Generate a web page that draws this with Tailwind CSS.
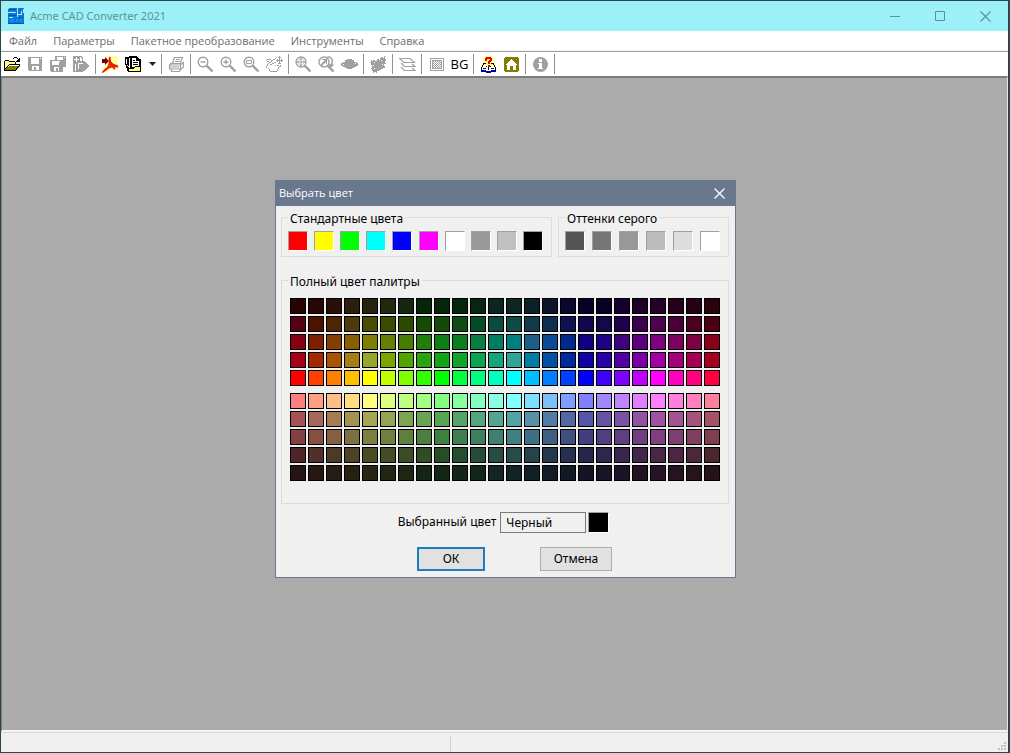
<!DOCTYPE html>
<html lang="ru">
  <head>
    <meta charset="UTF-8" />
    <meta name="viewport" content="width=device-width, initial-scale=1.0" />
    <title>Acme CAD Converter 2021</title>
    <script src="https://cdn.jsdelivr.net/npm/@tailwindcss/browser@4"></script>
  </head>
  <body class="relative flex h-screen flex-col overflow-hidden border-t border-b border-l border-r-2 border-[#30454b] bg-[#f0f0f0] font-['Open_Sans','Noto_Sans',sans-serif] text-[11px] leading-4">
    <!-- Title bar -->
    <header class="flex h-[30px] shrink-0 items-center bg-[#9cf0f8] pl-[7px] text-[#5f9297]">
      <svg class="h-4 w-4" viewBox="0 0 16 16" shape-rendering="crispEdges">
        <path fill="#0878d8" d="M0 0h16v16H0z" />
        <path fill="#b8e4ff" d="M0 4h8v1H0zM9 0h1v9H9zM10 6h4v1h-4zM13 3h1v4h-1zM15 1h1v4h-1zM1 9h4v1H1zM0 0h1v1H0z" />
        <path fill="#0454b0" d="M1 1h7v1H1zM0 15h16v1H0zM1 7h7v1H1zM11 9h4v1h-4z" />
        <path fill="#1c8ae8" d="M2 3h4v1H2zM2 11h4v3H2zM8 11h2v3H8zM12 11h2v3h-2z" />
      </svg>
      <h1 class="ml-[6px] font-['Noto_Sans',sans-serif]">Acme CAD Converter 2021</h1>
      <div class="ml-auto flex h-full">
        <button class="flex w-[45px] items-center justify-center" aria-label="Свернуть">
          <svg class="h-[11px] w-[11px]" viewBox="0 0 11 11"><path fill="none" stroke="currentColor" d="M0 5.5h10" /></svg>
        </button>
        <button class="flex w-[45px] items-center justify-center" aria-label="Развернуть">
          <svg class="h-[11px] w-[11px]" viewBox="0 0 11 11"><path fill="none" stroke="currentColor" d="M.5.5h9v9h-9z" /></svg>
        </button>
        <button class="flex w-[45px] items-center justify-center" aria-label="Закрыть">
          <svg class="h-[11px] w-[11px]" viewBox="0 0 11 11"><path fill="none" stroke="currentColor" stroke-width="1.2" d="M.5.5l10 10M10.5.5l-10 10" /></svg>
        </button>
      </div>
    </header>

    <!-- Menu -->
    <nav class="flex h-5 shrink-0 items-center border-b border-[#f0f0f0] bg-white text-[#6d6d6d]">
      <button class="px-2">Файл</button>
      <button class="px-2">Параметры</button>
      <button class="px-2">Пакетное преобразование</button>
      <button class="px-2">Инструменты</button>
      <button class="px-2">Справка</button>
    </nav>

    <!-- Toolbar -->
    <div class="flex h-[25px] shrink-0 items-center border-t border-[#a0a0a0] bg-white text-[#a0a0a0]" role="toolbar">
      <button class="flex w-[23px] justify-center" aria-label="Открыть">
        <svg class="h-[17px] w-[17px]" viewBox="0 0 17 17" shape-rendering="crispEdges">
          <path fill="#ffff90" d="M1 5h4v1h6v3H4l-3 5z" />
          <path fill="#808000" d="M5 10h11l-4 4H1v-1h1v-1h1v-1h2z" />
          <path fill="#000" d="M1 4h4v1H1zM0 5h1v9H0zM5 5h6v1H5zM11 6h1v3h-1zM5 8h11v1H5zM15 9h1v1h-1zM14 10h1v1h-1zM13 11h1v1h-1zM12 12h1v1h-1zM0 14h12v-1h1v1h-1v1H0zM4 9h1v1H4zM3 10h1v1H3zM2 11h1v1H2zM1 12h1v1H1zM10 1h3v1h-3zM9 2h1v1H9zM13 2h1v1h-1zM15 2h1v4h-4V5h1V4h1V3h1z" />
        </svg>
      </button>
      <button class="flex w-[23px] justify-center" aria-label="Сохранить" disabled>
        <svg class="h-[17px] w-[17px]" viewBox="0 0 17 17" shape-rendering="crispEdges">
          <path fill="currentColor" fill-rule="evenodd" d="M1 1h14v14H2l-1-1zM4 2v6h8V2zM5 10v4h2v-3h2v3h3v-4zM14 2v1h-1V2z" />
        </svg>
      </button>
      <button class="flex w-[23px] justify-center" aria-label="Сохранить все" disabled>
        <svg class="h-[17px] w-[17px]" viewBox="0 0 17 17" shape-rendering="crispEdges">
          <path fill="currentColor" fill-rule="evenodd" d="M5 0h11v11h-3v5H1l-1-1V4h5zM7 1v3h6V1zM2 5v4h7V5zM4 11v4h2v-3h2v3h1v-4zM14 1v1h1V1zM9 5h1v1H9z" />
        </svg>
      </button>
      <button class="flex w-[23px] justify-center" aria-label="Экспорт" disabled>
        <svg class="h-[17px] w-[17px]" viewBox="0 0 17 17" shape-rendering="crispEdges">
          <path fill="currentColor" fill-rule="evenodd" d="M0 0h9v1h1v4h2v1h1v1h1v1h1v1h1v2h-1v1h-1v1h-1v1h-1v1h-2v1H0zM3 1v2H1v1h2v2h1V4h2V3H4V1zM7 1v4h2V2H8V1zM5 7v6h1V8h4V7zM2 8v7h1V8z" />
        </svg>
      </button>
      <span class="mr-[3px] ml-[2px] h-5 w-px bg-[#909090]"></span>
      <button class="flex w-[23px] justify-center" aria-label="PDF">
        <svg class="h-[17px] w-[17px]" viewBox="0 0 17 17">
          <path fill="#ffffa0" d="M4 0h12v7l1 4-1 3H9l-6 3-2-2 2-5-2-3 2-5z" />
          <path fill="none" stroke="#e81808" stroke-width="1.8" d="M8 1c-1 4 1 8 8 9.500-6-.5-11 .5-14.500 5 4-1.500 7-7 6-13M8 8l5 5" />
          <path fill="#780010" d="M0 3h3V1l4 4-4 4V7H0z" />
        </svg>
      </button>
      <button class="flex w-[23px] justify-center" aria-label="Пакетное преобразование">
        <svg class="h-[17px] w-[17px]" viewBox="0 0 17 17" shape-rendering="crispEdges">
          <path fill="#000" d="M0 1h4V0h8v1h1v1h1v1h2v13H3v-1H2v-3H1V9H0z" />
          <path fill="#fff" d="M7 2h4v3h3v6H7zM4 2h1v9H4zM1 3h1v5H1z" />
          <path fill="#ffff80" d="M2 8l3 4h4l2-2h4v5H4z" />
          <path fill="#000" d="M8 4h2v1H8zM8 6h5v1H8zM8 8h5v1H8zM11 2h1v2h2v1h-3zM2 10h1v1h1v1h1v1H3v-1H2zM5 12h4v1H5zM9 11h1v1H9zM10 10h5v1h-5z" />
        </svg>
      </button>
      <button class="flex w-[14px] justify-center" aria-label="Еще">
        <svg class="h-[5px] w-[7px]" viewBox="0 0 7 5"><path fill="#202020" d="M0 0h7L3.5 4z" /></svg>
      </button>
      <span class="mr-[3px] ml-[2px] h-5 w-px bg-[#909090]"></span>
      <button class="flex w-[23px] justify-center" aria-label="Печать" disabled>
        <svg class="h-[17px] w-[17px]" viewBox="0 0 17 17" fill="none" stroke="currentColor" stroke-width="1.2">
          <path d="M4.500 7l2-5.500h8l-2 5.500M3 7.500h10M1.500 9v4h11V9zM1.500 9l2-2M12.500 9l3-2.500v4.500l-3 2.500M3.500 13v2.500h8l1-2M8 3.500h4M7 5.500h5M2 11h9" />
        </svg>
      </button>
      <span class="mr-[3px] ml-[2px] h-5 w-px bg-[#909090]"></span>
      <button class="flex w-[23px] justify-center" aria-label="Уменьшить" disabled>
        <svg class="h-[17px] w-[17px]" viewBox="0 0 17 17" fill="none" stroke="currentColor">
          <circle cx="6" cy="6" r="4.800" stroke-width="1.400" />
          <path d="M3.500 6h5" stroke-width="1.400" />
          <path stroke-width="2.400" d="M9.500 9.500l6 6" />
        </svg>
      </button>
      <button class="flex w-[23px] justify-center" aria-label="Увеличить" disabled>
        <svg class="h-[17px] w-[17px]" viewBox="0 0 17 17" fill="none" stroke="currentColor">
          <circle cx="6" cy="6" r="4.800" stroke-width="1.400" />
          <path d="M3.500 6h5M6 3.500v5" stroke-width="1.400" />
          <path stroke-width="2.400" d="M9.500 9.500l6 6" />
        </svg>
      </button>
      <button class="flex w-[23px] justify-center" aria-label="Увеличить область" disabled>
        <svg class="h-[17px] w-[17px]" viewBox="0 0 17 17" fill="none" stroke="currentColor">
          <circle cx="6" cy="6" r="4.800" stroke-width="1.400" />
          <path d="M3.500 4.500h5v3h-5z" />
          <path stroke-width="2.400" d="M9.500 9.500l6 6" />
        </svg>
      </button>
      <button class="flex w-[23px] justify-center" aria-label="Панорама" disabled>
        <svg class="h-[17px] w-[17px]" viewBox="0 0 17 17" fill="currentColor" shape-rendering="crispEdges">
          <path d="M0 4h1v1H0zM1 3h4v1H1zM5 4h2v1H5zM7 3h2v1H7zM9 2h1v1H9zM1 5h2v1H1zM3 6h2v1H3zM5 5h1v1H5zM2 7h1v1H2zM4 8h2v1H4zM6 7h2v1H6zM8 6h2v1H8zM1 8h1v2H1zM0 10h1v2H0zM2 12h1v1H2zM3 13h1v2H3zM4 15h7v1H4zM11 13h1v2h-1zM12 11h1v2h-1zM13 10h2v1h-2zM14 9h1v1h-1zM11 9h2v1h-2zM9 9h1v1H9z" />
          <path d="M13 0h1v1h-1zM12 1h3v1h-3zM13 2h1v6h-1zM10 4h7v1h-7zM11 3h1v3h-1zM15 3h1v3h-1zM12 7h3v1h-3z" />
        </svg>
      </button>
      <span class="mr-[3px] ml-[2px] h-5 w-px bg-[#909090]"></span>
      <button class="flex w-[23px] justify-center" aria-label="Показать все" disabled>
        <svg class="h-[17px] w-[17px]" viewBox="0 0 17 17" fill="none" stroke="currentColor">
          <circle cx="6" cy="6" r="5" stroke-width="1.300" />
          <path d="M1 6h10M6 1v10M4.500 3.500l1.500-1 1.500 1M4.500 8.500l1.500 1 1.500-1M3.500 4.500l-1 1.500 1 1.500M8.500 4.500l1 1.500-1 1.500" />
          <path stroke-width="2.400" d="M9.500 9.500l6 6" />
        </svg>
      </button>
      <button class="flex w-[23px] justify-center" aria-label="Предыдущий вид" disabled>
        <svg class="h-[17px] w-[17px]" viewBox="0 0 17 17" fill="none" stroke="currentColor">
          <circle cx="6" cy="6" r="5" stroke-width="1.400" />
          <path fill="currentColor" stroke="none" d="M4 3h5v5H8V6L4 10H3V8l4-4H4z" />
          <path d="M9 1.500c4-2 7 3 4 8M11.500 8l1 2.500 3-1.500" stroke-width="1.500" />
          <path stroke-width="2.400" d="M9.500 9.500l6 6" />
        </svg>
      </button>
      <button class="flex w-[23px] justify-center" aria-label="Обзор" disabled>
        <svg class="h-[17px] w-[17px]" viewBox="0 0 17 17" shape-rendering="crispEdges">
          <path fill="currentColor" d="M6 3h5v1h2v2h3v1h1v3h-2v1h-2v1h-2v1H6v-1H4v-1H2v-1H0V7h2V6h2V4h2z" />
          <path fill="#fff" d="M2 8h1v1H2zM14 7h1v1h-1z" />
        </svg>
      </button>
      <span class="mr-[3px] ml-[2px] h-5 w-px bg-[#909090]"></span>
      <button class="flex w-[23px] justify-center" aria-label="Регенерация" disabled>
        <svg class="h-[17px] w-[17px]" viewBox="0 0 17 17" shape-rendering="crispEdges">
          <path fill="currentColor" d="M11 2V1h2v1h1V0h1v3h1v2h-1v2h1v1h-2v2h1v2h-2v1h-2v1H9v1H7v2H6v-1H4v1H3v-2H2v-2H1v-1h1V9H1V7H0V6h1V4h1v1h1V4h2v1h2V3h2v1h1V2z" />
          <path fill="#fff" d="M4 6h1v1H4zM11 4h1v1h-1zM12 8h1v1h-1zM4 12h1v1H4zM3 9h1v1H3z" />
        </svg>
      </button>
      <span class="mr-[3px] ml-[2px] h-5 w-px bg-[#909090]"></span>
      <button class="flex w-[23px] justify-center" aria-label="Слои" disabled>
        <svg class="h-[17px] w-[17px]" viewBox="0 0 17 17" fill="none" stroke="currentColor" stroke-width="1.200">
          <path d="M.5 2.500H11L15.500 6.500H5zM2 7l3.500 3.500h10.500L13 8M2 11l3.500 3.500h10.500L13 12" />
        </svg>
      </button>
      <span class="mr-[3px] ml-[2px] h-5 w-px bg-[#909090]"></span>
      <button class="flex w-[23px] justify-center" aria-label="Сетка" disabled>
        <svg class="h-[17px] w-[17px]" viewBox="0 0 17 17" fill="none" stroke="currentColor" shape-rendering="crispEdges">
          <path d="M2.500 2.500h13v12h-13zM4.500 4.500h9v8h-9z" />
          <path stroke-dasharray="1 1" d="M5 5.500h8M6 6.500h7M5 7.500h8M6 8.500h7M5 9.500h8M6 10.500h7M5 11.500h8" />
        </svg>
      </button>
      <button class="flex w-[23px] justify-center text-black" aria-label="Фон BG">
        <span class="text-[13px]">BG</span>
      </button>
      <span class="mr-[3px] ml-[2px] h-5 w-px bg-[#909090]"></span>
      <button class="flex w-[23px] justify-center" aria-label="Помощь">
        <svg class="h-[17px] w-[17px]" viewBox="0 0 17 17" shape-rendering="crispEdges">
          <path fill="#ffff80" d="M4 0h8v2h2v6h2v5H1V8h2V2h1z" />
          <path fill="#fff" d="M3 9h4l1 1 1-1h4l2 4H1z" />
          <path fill="#000" d="M3 7h1v2H3zM2 9h1v2H2zM1 11h1v3H1zM13 7h1v2h-1zM14 9h1v2h-1zM15 11h1v3h-1zM4 7h2v1H4zM11 7h2v1h-2zM8 11h1v3H8zM6 10h1v1H6zM10 10h1v1h-1z" />
          <path fill="#0000a8" d="M1 14h5v1h5v-1h5v2h-5v1H6v-1H1zM3 12h3v1H3zM11 12h3v1h-3z" />
          <path fill="#e00000" d="M6 1h5v1h1v3h-1v1h-1v2H8V5h1V4h1V3H7v2H5V2h1zM8 9h2v2H8z" />
        </svg>
      </button>
      <button class="flex w-[23px] justify-center" aria-label="Домой">
        <svg class="h-[17px] w-[17px]" viewBox="0 0 17 17" shape-rendering="crispEdges">
          <path fill="#808000" d="M2 1h13v1h1v13h-1v1H2v-1H1V2h1z" />
          <path fill="#fff" d="M8 3h1v1h1v1h1v1h1v1h1v1h1v1h-1v5h-3v-4H7v4H4V9H3V8h1V7h1V6h1V5h1V4h1z" />
        </svg>
      </button>
      <span class="mr-[3px] ml-[2px] h-5 w-px bg-[#909090]"></span>
      <button class="flex w-[23px] justify-center" aria-label="О программе" disabled>
        <svg class="h-[17px] w-[17px]" viewBox="0 0 17 17">
          <circle cx="8.500" cy="8.500" r="7.500" fill="currentColor" />
          <path fill="#fff" d="M7 3h3v3H7zM6 7h4v5h1v1H6v-1h1V8H6z" />
        </svg>
      </button>
      <span class="mr-[3px] ml-[2px] h-5 w-px bg-[#909090]"></span>
    </div>

    <!-- Empty workspace -->
    <main class="flex-1 border-t-2 border-r border-b-2 border-l border-t-[#7c7c7c] border-r-[#e8e8e8] border-b-[#f4f4f4] border-l-[#7c7c7c] bg-[#ababab]"></main>

    <!-- Status bar -->
    <footer class="flex h-5 shrink-0 items-end justify-between border-t border-[#d7d7d7]">
      <span class="h-4 w-[450px] border-r border-[#d0d0d0]"></span>
      <svg class="mr-[2px] mb-[2px] h-2 w-2" viewBox="0 0 8 8" fill="#bfbfbf" shape-rendering="crispEdges">
        <path d="M6 0h2v2H6zM3 3h2v2H3zM6 3h2v2H6zM0 6h2v2H0zM3 6h2v2H3zM6 6h2v2H6z" />
      </svg>
    </footer>

    <!-- Color dialog -->
    <div class="absolute inset-0 flex items-center justify-center pt-1 pl-[2px]">
      <section class="w-[461px] border border-[#69788c] bg-[#f0f0f0] font-['Noto_Sans','Open_Sans',sans-serif] text-[12px] text-black" role="dialog" aria-labelledby="dialog-title">
        <div class="flex h-[25px] items-center justify-between bg-[#69788c] pr-[10px] pl-[3px] text-white">
          <h2 id="dialog-title" class="font-['Open_Sans',sans-serif] text-[11px]">Выбрать цвет</h2>
          <button aria-label="Закрыть окно">
            <svg class="h-[11px] w-[11px]" viewBox="0 0 11 11"><path fill="none" stroke="currentColor" stroke-width="1.300" d="M.5.5l10 10M10.500.5l-10 10" /></svg>
          </button>
        </div>

        <form class="px-[5px] pt-[3px] pb-[6px]" onsubmit="return false">
          <div class="mr-px flex gap-[6px]">
            <fieldset class="w-[271px] border border-[#dcdcdc] pt-1 pr-2 pb-[5px] pl-[6px]">
              <legend class="px-[2px] pt-[2px]">Стандартные цвета</legend>
              <div id="standard" class="flex justify-between"></div>
            </fieldset>
            <fieldset class="flex-1 border border-[#dcdcdc] pt-1 pr-2 pb-[5px] pl-[6px]">
              <legend class="px-[2px] pt-[2px]">Оттенки серого</legend>
              <div id="grays" class="flex justify-between"></div>
            </fieldset>
          </div>

          <fieldset class="mt-[15px] mr-px border border-[#dcdcdc] px-[6px] pt-2 pb-[22px]">
            <legend class="px-[2px] pt-[2px]">Полный цвет палитры</legend>
            <div class="flex flex-col gap-[7px] px-[2px]">
              <div id="shades" class="grid grid-cols-24 gap-[2px]"></div>
              <div id="tints" class="grid grid-cols-24 gap-[2px]"></div>
            </div>
          </fieldset>

          <div class="mt-2 flex items-center justify-center pr-1">
            <label for="selected">Выбранный цвет</label>
            <input id="selected" class="ml-1 h-[21px] w-[86px] border border-[#7a7a7a] px-[5px]" value="Черный" readonly />
            <span id="preview" class="ml-[2px] h-[21px] w-[21px] border border-t-[#a0a0a0] border-r-white border-b-white border-l-[#a0a0a0] bg-black"></span>
          </div>

          <div class="mt-[14px] flex justify-center gap-[55px] pl-[18px]">
            <button class="h-6 w-[68px] border-2 border-[#1f7cc0] bg-[#e1e1e1]">ОК</button>
            <button type="button" class="h-6 w-[72px] border border-[#adadad] bg-[#e1e1e1]">Отмена</button>
          </div>
        </form>
      </section>
    </div>

    <script>
      const standard = ["#ff0000", "#ffff00", "#00ff00", "#00ffff", "#0000ff", "#ff00ff", "#ffffff", "#999797", "#c0c0c0", "#000000"];
      const grays = ["#555555", "#767676", "#999797", "#bbbbbb", "#dddddd", "#ffffff"];

      const shades = [
        "260404 280606 2a0f06 2c1d0c 26240c 20280f 14280f 06260a 062609 06260c 06260f 0b2620 0d2622 0d1f29 0d1429 08082c 080026 080026 14002a 1f0028 260026 26001f 260014 2a040b",
        "580014 4c1200 4c2600 4f3a0b 4c4c00 3a4c00 2b4c00 134c04 104c08 0e4c13 044c26 0b4c3f 0e4c45 123a4c 0e2e50 0d1250 10074c 13084c 20004c 3a004c 4f004f 4c0039 4c0022 4c0013",
        "850012 7f1f00 823f00 875f00 7f7f00 667f00 467f00 1f7f08 0e7f14 0b7f20 087f40 007f60 007f7f 1b5f88 0e4a93 002a8c 10007f 1f0088 3f007f 5c0080 7f007f 7f0060 7f003f 8a0018",
        "a50018 a52900 a85400 a58016 98a52b 7ca500 52a500 29a514 14a514 10a528 0ba552 14a57c 30a598 007ca5 0052a5 0029a0 1200a5 2900a8 5200a5 7c00a5 a500a5 a5007c a50052 a5001f",
        "ff0000 ff4000 ff8000 ffbf00 ffff00 bfff00 80ff00 30ff00 00ff00 00ff40 00ff80 00ffbf 00ffff 00bfff 0080ff 0040ff 0000ff 4000ff 8000ff bf00ff ff00ff ff00bf ff0080 ff0040"
      ];
      const tints = [
        "ff7f7f ff9f7f ffbf85 ffdf84 ffff7f dfff7f bfff7f a0ff84 85ff7f 85ff9f 85ffbf 88ffe0 7fffff 7fdfff 7fbff8 7f9fff 827fff a585ff bf84ff df7fff ff7fff ff7fdf ff7fbf ff7f9f",
        "a55254 a5685a a57c52 a59150 a5a552 91a552 7ca552 67a552 56a552 52a567 52a57c 52a591 52a5a5 5791a5 527ca5 5567a5 5654a5 6752a5 7c52a5 9152a5 9f529f a55291 a5527c a55267",
        "854043 85503f 855f3f 7c6f40 7c7f3f 6f7f3f 5f7f3f 4f7f3f 3f7f3f 3f7f4f 3f7f5f 3f7f6f 3f7f7f 3f6f82 3f5f82 3f4f7f 433f7f 4f3f80 5f3f7f 6f3f7f 7f3f7f 7f3f6f 7f3f5f 803f4f",
        "4f2627 50302a 4c3926 4c4326 4a4c26 434c26 394c26 2f4c26 284c26 264c2f 264c39 264c43 264c4c 26434c 26394c 262f4c 28264c 2f264c 39264c 43264c 4a2647 4c2643 4c2639 4c262f",
        "261316 26180f 261c13 262113 262613 212613 1c2613 132613 132614 132618 13261c 132621 132426 0f2126 131c26 131826 151326 181326 1c1326 211324 261326 261321 26131c 261318"
      ];

      function addSwatches(id, colors, className) {
        const box = document.getElementById(id);
        colors.forEach((color) => {
          const button = document.createElement("button");
          button.type = "button";
          button.className = className;
          button.style.backgroundColor = color;
          button.setAttribute("aria-label", color);
          button.onclick = () => selectColor(color);
          box.appendChild(button);
        });
      }

      function selectColor(color) {
        document.getElementById("selected").value = color === "#000000" ? "Черный" : color;
        document.getElementById("preview").style.backgroundColor = color;
      }

      const split = (rows) => rows.join(" ").split(" ").map((hex) => "#" + hex);
      const sunken = "h-5 w-5 border border-t-[#a0a0a0] border-r-white border-b-white border-l-[#a0a0a0]";
      const cell = "h-4 border border-black";

      addSwatches("standard", standard, sunken);
      addSwatches("grays", grays, sunken);
      addSwatches("shades", split(shades), cell);
      addSwatches("tints", split(tints), cell);
    </script>
  </body>
</html>
